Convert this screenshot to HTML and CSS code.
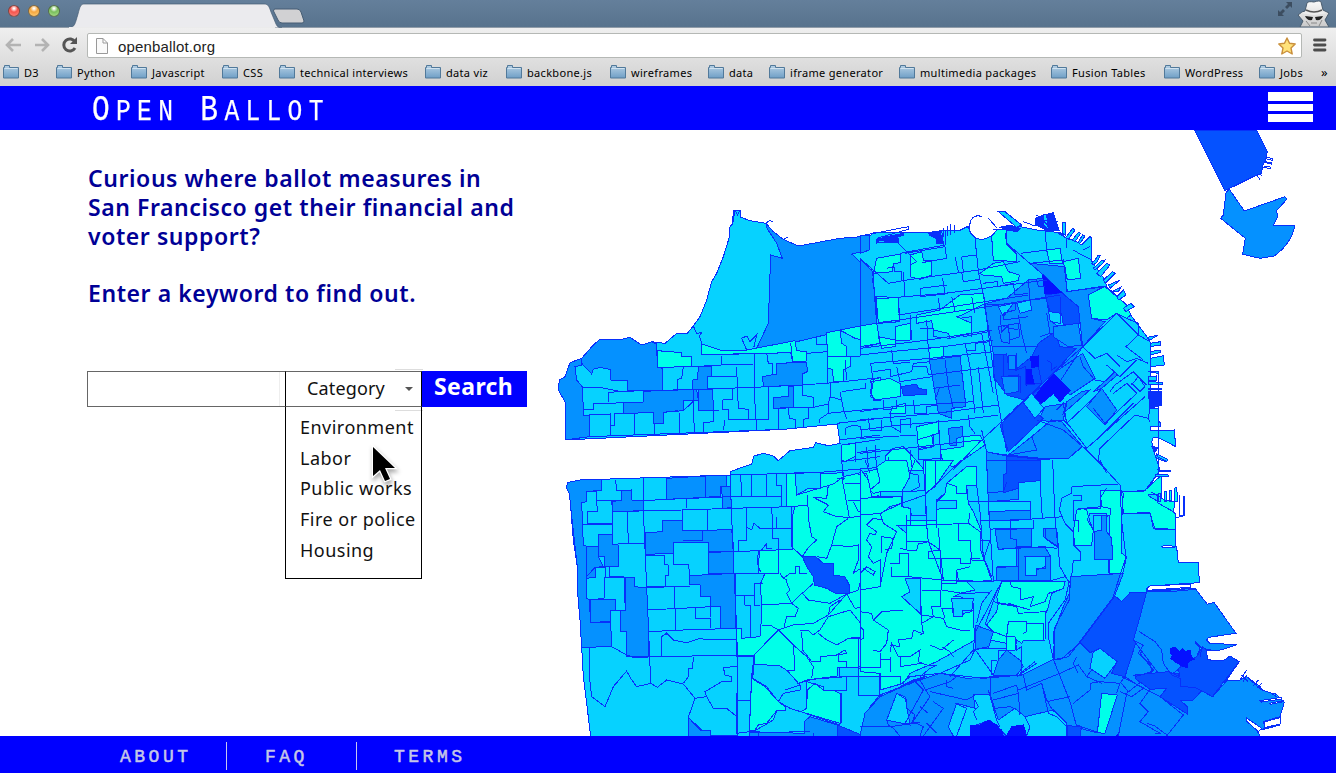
FILE: index.html
```html
<!DOCTYPE html>
<html lang="en">
<head>
<meta charset="utf-8">
<title>Open Ballot</title>
<link rel="stylesheet" href="styles.css">
</head>
<body>
<svg class="defs" width="0" height="0" aria-hidden="true">
  <defs>
    <linearGradient id="folderFill" x1="0" y1="0" x2="0" y2="1"><stop offset="0" stop-color="#b4cfe4"/><stop offset="1" stop-color="#6f9fc6"/></linearGradient>
    <linearGradient id="hatFill" x1="0" y1="0" x2="0" y2="1"><stop offset="0" stop-color="#fafafa"/><stop offset="1" stop-color="#c9c9c9"/></linearGradient>
    <symbol id="folder" viewBox="0 0 16 15"><path d="M.5 14V3.500H1.500V1.500H6.500V3.500H15.500V14Z" fill="url(#folderFill)" stroke="#51799a"/><path d="M1.500 4.500H14.500" stroke="#d0e2f0"/></symbol>
  </defs>
</svg>
<div class="browser">
  <div class="tabstrip">
    <div class="lights"><i class="light red"></i><i class="light amber"></i><i class="light green"></i></div>
    <svg class="tabs" width="240" height="28" viewBox="0 0 240 28"><path d="M0 28C6 27 6 24 9 14 11 6 12 4 15 4H195C199 4 200 6 202 12L207 24C208 27 210 27.500 213 28Z" fill="#ebebee" stroke="#465d74" stroke-width=".7"/><path d="M0 27.600H206" stroke="#ebebeb" stroke-width="1.200"/><path d="M206 9H228Q231 9 232 12L235 21Q235 23 233 23H213Q210 23 209 20L204.500 11Q204.500 9 206 9Z" fill="#d1d1d3" stroke="#465d74"/></svg>
    <svg class="fullscreen" width="16" height="16" viewBox="0 0 16 16"><path d="M9 1H15V7L13 5 10 8 8 6 11 3ZM1 9V15H7L5 13 8 10 6 8 3 11Z" fill="#3c4d60"/></svg>
    <svg class="incognito" width="34" height="27" viewBox="0 0 34 27"><path d="M3 27L6 21 1 15 5 12 8 11 10 3Q11 1 17 2 23 0 24 2L26 10 32 13 28 20 32 27Z" fill="url(#hatFill)" stroke="#4a5c6e"/><path d="M4 13Q16 9 30 13L17 15Z" fill="#eee"/><path d="M9 10Q17 14 25 10" fill="none" stroke="#555" stroke-width="1.500"/><path d="M8 16L16 17 15 20Q10 21 8 16ZM18 17L26 16Q24 21 19 20Z" fill="#222"/><path d="M9 21L13 26M25 20L22 26M14 23H20" stroke="#888" fill="none"/></svg>
  </div>
  <div class="toolbar">
    <svg class="nav" width="80" height="24" viewBox="0 0 80 24"><g fill="none" stroke="#b3b3b3" stroke-width="2.600"><path d="M7 11H21M13 5L7 11 13 17M35 11H48M42 5L48 11 42 17"/></g><path d="M75 8A6 6 0 1 0 75 14" fill="none" stroke="#555" stroke-width="3"/><path d="M77 3V10H70Z" fill="#555"/></svg>
    <div class="omnibox">
      <svg width="14" height="18" viewBox="0 0 14 18"><path d="M1.500 1.500H8L12.500 6V16.500H1.500ZM8 1.500V6H12.500" fill="#fafafa" stroke="#999"/></svg>
      <span class="url">openballot.org</span>
      <svg class="star" width="20" height="20" viewBox="0 0 20 20"><path d="M10 2L12.500 7.300 18.200 8 14 12 15.200 18 10 15 4.800 18 6 12 1.800 8 7.500 7.300Z" fill="#ffe27a" stroke="#c98f3c" stroke-width="1.400" stroke-linejoin="round"/></svg>
    </div>
    <svg class="menu" width="14" height="14" viewBox="0 0 14 14"><path d="M1.500 2H12M1.500 7H12M1.500 12H12" stroke="#4c4c4c" stroke-width="2.800" stroke-linecap="round"/></svg>
  </div>
  <nav class="bookmarks">
    <a><svg><use href="#folder"/></svg>D3</a><a><svg><use href="#folder"/></svg>Python</a><a><svg><use href="#folder"/></svg>Javascript</a><a><svg><use href="#folder"/></svg>CSS</a><a><svg><use href="#folder"/></svg>technical interviews</a><a><svg><use href="#folder"/></svg>data viz</a><a><svg><use href="#folder"/></svg>backbone.js</a><a><svg><use href="#folder"/></svg>wireframes</a><a><svg><use href="#folder"/></svg>data</a><a><svg><use href="#folder"/></svg>iframe generator</a><a><svg><use href="#folder"/></svg>multimedia packages</a><a><svg><use href="#folder"/></svg>Fusion Tables</a><a><svg><use href="#folder"/></svg>WordPress</a><a><svg><use href="#folder"/></svg>Jobs</a><span>»</span>
  </nav>
</div>
<header class="site-header">
  <h1 class="brand"><span class="cap">O</span>PEN <span class="cap">B</span>ALLOT</h1>
  <div class="burger"><i></i><i></i><i></i></div>
</header>
<main class="content">
  <section class="intro">
    <p class="lead">Curious where ballot measures in<br>San Francisco get their financial and<br>voter support?</p>
    <p class="lead">Enter a keyword to find out.</p>
    <div class="search">
      <div class="field"></div>
      <div class="category"><span>Category</span><i class="caret"></i>
        <ul class="options"><li>Environment</li><li>Labor</li><li>Public works</li><li>Fire or police</li><li>Housing</li></ul>
      </div>
      <div class="go"><span>Search</span></div>
      <svg class="cursor" width="36" height="44" viewBox="0 0 36 44"><path d="M5 4V33L12 27 17 38 22 36 17 25H27Z" fill="#000" stroke="#fff" stroke-width="2.500" paint-order="stroke"/></svg>
    </div>
  </section>
  <svg class="map" width="786" height="606" viewBox="0 -210 2358 1818">
    <!-- peninsula base -->
    <path class="c" d="M45 720V605L25 570 28 540 45 530 60 488 95 475 130 435 150 418 205 420 240 412 275 435 305 425 345 430 378 402 412 400 430 378 450 350 470 300 485 245 500 220 520 170 537 115 540 80 548 72 550 30H570L573 52 600 62 648 70 670 95 700 118 745 138 800 132 870 115 900 118 960 108 970 98 990 97 1130 98 1180 92 1225 92 1255 80 1262 100 1275 113 1295 120 1325 108 1340 90 1410 80 1460 90 1530 98 1550 115 1580 125 1595 135 1620 110 1625 115 1623 180 1665 240 1670 260 1730 315 1742 345 1792 412 1800 425V625H1825L1827 665 1832 670V680H1800V692L1873 690 1877 740 1830 715 1810 712 1805 725 1810 750 1825 795 1830 810 1810 840 1795 870 1800 885 1825 890 1875 955V1030L1880 1042 1885 1088H1945L1948 1148 1800 1158 1790 1165V1172L1935 1165 1972 1213 1992 1207 2058 1300 1975 1312 1970 1320 1980 1330 2062 1334 2005 1352 1968 1350V1375L1990 1383 2025 1382 2040 1368 2068 1385 2030 1440 2070 1440 2090 1430 2130 1460 2150 1482 2175 1480 2203 1507 2190 1550 2140 1565 2145 1585 2190 1575 2135 1590 2086 1555 2120 1590 2110 1608H122L100 1430 95 1340 90 1260 83 1180 82 1100 70 1020 62 920 58 880 50 865 52 848 90 840 540 825V815L605 792 612 768 640 760 670 768 685 782 720 752 790 742 797 728 835 737 870 730 862 672 700 688Z"/>
    <!-- Presidio and Richmond -->
    <g>
      <path class="m" d="M95 475L130 435 150 418 205 420 240 412 275 435 305 425 320 432 322 502 338 505V570L232 572V542L182 540 180 508 150 502 130 508 125 522 95 490ZM45 720V605L25 570 28 540 45 530 60 488 95 475V495L75 500 80 540 98 562 100 645H118V710ZM280 574L368 570 440 568 445 600H400V632L340 637V670H312L310 638 220 640V608L280 606ZM445 498L485 500V530H472V567H428V540L443 538ZM445 568H488L490 632H445ZM680 490L770 487 772 515 757 522V555L640 560 638 530 680 522ZM715 560H730V622L670 625V592L715 590ZM648 72L670 95 700 118 745 138 870 115 960 108 958 150 905 162 940 195 965 210 972 260 978 320 980 368 740 425 620 445 655 370 662 165 697 175 680 130 648 80Z"/>
      <path class="a" d="M322 452L395 458V470H425V500L322 502ZM455 432L510 450H590L735 422 740 452 770 455 768 485H728L722 458 455 465ZM830 398L870 390 875 430 890 440V468H832ZM832 470H900V500L880 510V545H850L848 508 832 505ZM870 390L980 368 990 430 948 440 940 420 915 415ZM962 540L990 533V600H970ZM875 735L915 730V770L885 785 875 780Z"/>
      <path class="n" d="M430 378L440 400 455 398 448 408 455 430V465M320 432V452M590 450L575 415 590 408 600 425 620 405 612 440M548 72L555 30 562 45 570 30M648 70L660 60 668 66M700 118L715 110M612 458V562L620 690M455 465L612 460M425 500L515 495 612 492M515 468V495M560 500L562 560 565 625 595 628V660M98 562L150 562 210 574 385 570 612 562 757 555 850 548 990 533M100 628H130V612L220 608M175 606V578L210 574M118 645L180 642V675H192V642L220 640M182 645V705M253 640V705M312 670V702M118 710L700 688M340 637L385 632M400 632L430 604V568M388 640V700M430 605L433 697M445 568V632L510 630M490 632V665L460 668 462 695M400 500L395 535 382 538V568M485 530L560 528M548 565V598L518 600V628L536 630V660L620 658M525 660 520 690M655 560V658L620 660M685 625V690M650 460L655 490 668 492V522M722 428 728 485M770 460 830 455M800 408V432H832V548M715 622L718 655 735 658V685M775 622V655L760 658V680M670 625L790 622 835 612M757 555V585L790 592V620M842 548V585L835 612V640L808 658V670M870 575L880 625 890 658M840 590 875 600M875 575L945 565 945 550M832 640L990 625M885 480 890 540M930 440V468L900 470M860 670L990 655M868 720 990 705M885 705V685L910 675 932 680 935 710M875 735L990 718M915 730 918 785M920 758 990 748M875 785 990 770"/>
    </g>
    <!-- Downtown, Western Addition, South of Market -->
    <g transform="translate(930)">
      <path class="a" d="M50 175L120 162V188L100 192 98 215 40 220ZM150 165L185 155 190 180 215 182V225L180 238 150 230ZM48 290L115 292 118 360 55 368ZM0 378L50 370 60 430 0 440ZM105 380L150 370 152 420 105 422ZM55 410L105 420V440L65 445ZM170 345L240 330 300 285 370 280 375 310 305 345 290 350 335 370 335 400 270 415 265 400 220 390 215 362 170 370ZM205 445L250 440V470L210 475ZM395 110L412 88 438 90V130L468 160V185L400 180ZM360 220L400 190 430 185 445 215 478 225 475 242 430 250 425 230 370 225ZM560 150L600 145 608 190 570 192ZM610 185L655 175 662 235 622 240ZM685 285L735 260 800 315 812 345 800 355 770 340 740 360 695 355ZM495 345L515 340 522 385 540 390 535 415 525 420 528 450 510 452 500 395ZM35 545L90 535 120 550V590L45 600 32 580ZM100 620L135 610V640L90 640ZM170 680L235 665V700L215 705 220 740 175 745ZM310 710L360 705 375 735 280 800 250 790 240 750 310 740ZM75 770L100 745 130 740 150 760 185 800 190 810H75Z"/>
      <path class="m" d="M0 105L30 108 28 150 0 160ZM0 175L38 215 50 370 0 378ZM208 480L300 468 318 620 275 625V655L235 640 222 560ZM265 685L308 680V710L290 715V735H270ZM372 312L440 295 505 240 550 235 560 300 570 360 668 440 735 365 695 355 685 285 735 258 620 275 615 200 510 190 550 225 640 310 655 320 668 440 570 590 440 580 400 460ZM580 520L668 460 705 535 630 585ZM620 605L665 575 690 570 610 640ZM680 620L725 565 770 630 735 675ZM700 575L745 535 765 515 772 525 725 565ZM515 710L575 660 605 665 668 740 625 775H545L445 765ZM535 660L555 620 620 610 610 660 575 665ZM380 755L440 768V810H380Z"/>
      <path class="c" d="M495 600L520 580 550 630 520 650ZM470 310L510 300 515 330 480 340ZM415 320L460 310 430 350Z"/>
      <path class="d" d="M555 285L605 278 655 320 660 370 610 375 605 340 570 335ZM400 465L440 462 445 495 465 510 515 470 535 430 585 395 600 440 648 445 580 520 495 600 440 585 400 530ZM125 560L170 552 175 565 200 570V582L130 588ZM495 600L550 555 530 590 515 580 490 610 550 655 445 755 420 675ZM440 768L540 778V810H440Z"/>
      <path class="c" d="M490 608L515 580 552 625 525 655Z"/>
      <path class="v" d="M548 225L605 278 555 282ZM512 470L535 468V500L515 502ZM495 507H515V520L522 550 500 555ZM580 520L630 572 600 605 580 580 545 610 525 590 555 550Z"/>
      <path class="m" d="M445 465H465V510L445 508ZM425 530L475 525V575L435 582ZM580 380L655 370 665 435 625 440 580 410ZM415 380L445 375 450 430 425 425Z"/>
      <path class="n" d="M0 175L85 250 140 240 355 210 480 185M40 220 38 250M115 130 170 185 150 195 152 230M80 205 102 200 105 215 125 215V240M255 90V135L120 160M135 160 255 140 260 175 185 188M285 170 295 215M345 115 355 215 375 310 385 400 410 580 440 755M305 170 350 165M305 170 310 215M435 100 440 130 550 225M482 160 560 150M555 90 560 150 570 192M510 190 610 180 622 275M130 215 135 290 50 297M180 265 260 255M248 235 255 280 135 290M180 265V290L255 282M305 215 310 245 360 238M368 250 412 245V260L460 250M255 280 560 240M115 295 120 365 55 370M115 345 505 285M235 295 240 330M275 290 285 335M335 290 345 340M50 370 385 320 600 285M150 345 155 420M200 360 205 450M180 385H220V410L270 415M300 355 335 350 335 410M0 445 205 420 395 390M0 465 90 455 250 440 400 420M30 490 210 475 400 455M95 450 100 490 150 488M40 515 90 508V530L155 515 160 490 210 485M32 490 40 545 32 590 50 600M110 500 120 545 215 530M160 500 200 500 205 525 405 500M255 480 265 560 280 625M300 470 318 620M315 430 330 500 345 640M355 500 370 640M365 400 400 580M310 410 385 395M320 450H345V430L390 425M0 635 100 620 340 605M0 660 230 640 415 615M0 690 120 675 300 660 415 645M0 715 170 705M0 760 90 750 360 720M25 655 30 690 65 690V660M90 640 95 680 120 695V660L150 655V685M160 600 165 640 200 640V620L235 615M240 560 225 600M220 565 300 555M170 720 220 705 220 740 175 750V780L245 775M235 660 245 810M365 690 380 755 400 760 440 765 545 778 625 775 665 740M325 645 330 680 345 700M150 750 155 800M45 735 50 810M20 740 25 800M85 770 90 810M70 600V630L110 625V600M380 315 465 310V330L430 340V360L505 350M420 345 425 395 445 375 475 370 480 410 450 420M430 380 475 390M475 345 485 400 500 460M505 240 510 300 560 295M460 250 465 285 505 280M530 240 535 260 555 260M560 340 570 400 540 410M600 290V370L570 365M430 465V530H480V580M470 460V510L495 500V555L545 550 535 500M400 440 535 440M560 480 575 490V510L590 500"/>
      <path class="n" d="M280 810L360 725 580 520 668 440 770 340 835 405 870 425M668 440 705 475 740 460 780 500M770 465 800 485 830 475 865 490M770 340 800 355 835 370 835 405 798 440 850 480M460 630 580 520M660 470 670 500 705 540 735 545M740 495 780 530 830 480M530 660 610 690 680 750 740 810M515 710 530 750 445 765M610 660 630 680 680 745 855 590M590 630 610 610 620 670 705 590M760 580 800 550 830 580 735 670 700 625M710 720 820 610M720 745 825 645 865 655 870 665M715 780 720 745M715 780 735 810M750 575 765 555 820 515 860 555M815 555 835 530 855 560 840 575 815 550M865 655 870 625M620 275 735 260M695 180 665 165 640 150M595 100 620 115V145M670 150 690 140"/>
      <path class="n" d="M330 90Q325 50 355 47L365 50M385 55 412 85M0 108 145 80M50 115 145 88 145 78M50 128H115V115M205 98 245 92 250 130"/>
      <path class="k" d="M50 118L80 110 130 100V106L112 112V125L70 128 80 122 60 120 50 130ZM205 98L240 95 245 110 250 132 228 130V115L208 105ZM525 55L550 45 580 38 598 92 560 92 540 80 525 75ZM420 82L450 75 480 85 470 95 440 90ZM865 575H905V615L895 618 870 625ZM875 740L895 742 885 755Z"/>
      <path class="c" d="M415 35H435L485 75 470 82ZM550 42L560 45 565 88 550 75ZM607 68H615V105L607 100ZM638 85L645 90 625 118 617 113ZM655 97 662 100 645 125 637 120ZM668 105 675 108 660 130 654 127ZM695 190 705 180 715 165 722 165 712 185 700 195ZM700 205 725 182 735 180 728 190 705 210ZM710 220 740 190 750 195 722 230ZM730 240 758 215 765 220 735 250ZM745 255 780 240 750 265ZM755 275 782 262 775 275ZM770 290 790 270 798 285 775 300ZM790 325 812 310 822 320 798 335ZM862 412 895 405 870 420ZM870 430 902 425V435L870 440ZM870 455 902 450V457L870 465ZM870 475 910 467 913 495 870 500ZM865 515H895V515 868 520ZM865 530 888 528V540H865ZM865 545 908 547V552H865ZM865 565H905V567H865ZM885 765 922 778 918 785 890 775Z"/>
      <path class="n" d="M250 110 252 85M262 108V78M272 105V72M282 100V75M300 92 320 80 330 90M530 60 595 65M530 45 580 90M490 65 525 78M400 90 480 85"/>
    </g>
    <!-- Sunset and Twin Peaks -->
    <g transform="translate(0 780)">
      <path class="m" d="M52 68L90 60 155 58V90L110 95V125L95 128 100 255 108 258 110 330V415L120 420V450L122 487 182 487 185 560 95 562 90 480 83 400 82 320 62 140 58 100 50 85ZM185 125L215 120V92L245 90V120L280 122V152L188 155ZM145 225L187 222V253L205 255V320H162V290L145 288ZM108 258H145V290L160 320 135 322V352L110 355ZM118 420L195 418V450H182V485L122 487ZM222 352L252 352V380L290 383 296 515V590H230V515H212V452H226ZM348 55L467 48V112L350 118ZM467 48L530 47V80H512V108L467 112ZM515 80H540L545 143 518 145ZM285 218L338 215V183L397 180V213L460 212 545 208 552 275 475 277V247H400L370 248V280L288 283ZM475 275L550 273V340H475ZM418 347L555 340V505H512V440L480 438V410L450 408V375L420 373Z"/>
      <path class="a" d="M710 42L765 38V80L812 85V42L880 38V50L990 25V165H940L990 180V620L862 622V648L770 660 740 672 712 632 612 612V585H562L560 505 575 505V535L630 530 635 470 632 370 645 340H625L628 272 728 268V165L735 140H710ZM605 655L645 680 685 725 705 740V752H680L670 780 615 812H598ZM770 665L820 680V692L850 690 870 700V790L752 755 770 745ZM925 625H990V648H925Z"/>
      <path class="d" d="M757 290H797L820 310H850V345L885 350 898 375V400L860 402 830 385 793 375 790 350 770 320ZM862 795L935 825 940 828H862Z"/>
      <path class="m" d="M415 772L450 810 480 812V828H415ZM598 815L762 820V785L780 770 862 795V828H598ZM935 828L940 790 960 740 990 705V828Z"/>
      <path class="c" d="M735 38H812V85H775L740 105ZM868 622H925V648H868ZM562 590H612L605 655 598 815 560 820ZM612 612L690 618 712 632 750 675V690L700 700 685 725 650 680 608 655Z"/>
      <path class="n" d="M90 60 540 45 800 38 990 22M110 95H140V122L210 120M140 122 142 155H112V190L187 192M97 192H187V222M187 125V250M205 250 285 250M197 60 200 92H245M280 52V152L290 380 296 515 302 670M280 122 350 118 545 110 695 108M185 155 395 150 545 145 725 140 775 135M232 155 235 250M410 115V145M397 150V213L458 212V242H400M472 150V210M110 350 135 322 205 320M285 285H342V312L355 315V345H345V378L290 380M370 280V312H415L420 345M373 382 377 510M165 352H222M165 320V352M225 352V450M165 352 162 415 118 420M195 420V450H212V515H230V580M178 320V350H222M290 383 420 378M290 450 450 442 480 440V470M436 445V475H480V505M296 515 400 510 560 505 575 505M335 590V530L350 520 370 540 410 548 450 535 475 540 560 538M350 515V525M95 562 185 560 230 585 250 592 560 585 612 588M120 562 118 650 125 710 165 740 190 680 230 633 242 655 260 680 302 670 322 682 350 660 400 672 435 715 470 710M430 590 428 625H415V650L400 670M435 715 415 772V828M470 710 465 695 515 665H545V650L525 645 520 622 560 620M470 710 490 745H530L558 768M415 772 455 810 480 812 482 825 560 828M558 505V590H562V722 828M562 722H600M612 588 605 650 598 810M540 45 552 340 560 505M572 45 575 108M605 45 603 108M650 45 648 108M680 42V75H695V138M708 42 710 140M550 340H632M590 145V240H565V275M550 275 625 272 730 268M588 200 605 210 612 190 630 205 665 205M665 140 668 205H725M680 170V205M668 205V235H685V340H632M555 405H612V370H640M582 408 585 435H600V535M612 405V435H630M725 140V260L757 290M740 105 850 72 880 50M773 105 775 175 785 230 800 240 775 262 757 290M790 112 830 115 835 75M790 112 835 135 820 155 860 170 898 172 990 165M875 50 898 172M893 122H930V95H945V70L885 70M910 125 925 155 960 160 965 125 985 105M860 55 885 55M925 45 950 40 955 70M800 290 830 295 845 255 860 200 895 175M845 255 900 260 925 255V300L910 340 940 320 970 345 935 350 925 390 898 400M945 170 960 190 950 230 985 225 960 235 960 260 950 290 970 310 975 330M945 185 975 175 990 180M635 270 650 250V265H665M625 272 622 310 632 337M690 340 700 355 720 340H735V320H748V340H770M690 340 695 350 710 360 712 375 720 390 710 400 725 430 632 435M757 400 790 370M757 400 775 420 840 430 890 402 915 445 945 440 970 460 990 480M725 430 757 398M725 430 745 445 735 470 710 470 702 500M635 495 660 495 685 510 730 495 790 490 835 465 865 430 890 402M835 465 840 440 870 420M612 585 685 510 730 555 770 590 790 620 785 655M730 555 735 630 712 632M612 585V612M750 512H775L790 525 810 510 835 470 900 450 940 500V530L895 535 860 555 830 540 805 520M755 515 758 570 785 605H810V590L860 585 885 570 890 580 865 585V605H890V622H862V648M895 535H990M925 535V620M965 575 975 540M685 725 720 745 752 755 870 795M615 810 625 795 650 790 680 752M740 672 785 658 890 650V690H850M705 690 750 675M770 745 772 690 795 670 820 690M870 700H875V790M925 650V705H990M600 818 780 815M790 818V828M625 820V828M940 800 990 802M875 0 880 60M945 0 960 40"/>
    </g>
    <!-- Mission, Noe Valley, Excelsior, Potrero -->
    <g transform="translate(930 780)">
      <path class="a" d="M50 20L80 0H140L150 50 125 95H60L40 100 30 90 60 65ZM190 0 280 0 225 80 195 100ZM0 25 25 60 35 110 125 110V140L150 145V195H110L140 220V245H205L240 270 250 360 320 365 345 390 300 400 280 410H300L340 430V480L345 540 230 605 150 640 130 670 60 690V640L0 635ZM260 70 320 20H350V75H320L325 130 340 155 365 215 360 265 395 360 350 365 320 365 250 360 205 245 140 245V180H230V120L255 100ZM425 365H615L610 385 575 400 565 440 558 460 555 540H490L485 550 470 540 465 570 440 572 440 550 390 540 400 515 380 495 410 455 415 430 410 410ZM640 215 650 150 670 145 725 140 720 90H785L790 100 785 180V280L800 290 788 340 748 340V165H700V210L695 255 645 258ZM785 95H850L905 45 905 130 945 160V208H885L870 160H790Z"/>
      <path class="c" d="M127 95 195 92 200 165 155 168 150 145 127 140ZM230 122H290V145H255L230 148ZM275 415H340L335 455 310 460 308 470H280ZM135 355H180V460L125 410 150 395ZM690 160H740V165H700V210L682 180Z"/>
      <path class="m" d="M380 0H440V65L430 90 475 65V118L385 125ZM385 155 510 150V178L390 182ZM405 210 515 205V260L415 268ZM470 260 555 262 572 290V362H410V322L470 320ZM550 205H590L595 260 550 230ZM345 495 400 515 385 565 345 568ZM725 165H740V215L755 235 758 298H702V215L725 210ZM632 350 790 340 765 405 660 545 625 590 585 598 580 520 610 440 628 400ZM415 600 440 570 480 600 490 620 470 645H400ZM0 828 15 760 60 710 150 670 240 640 320 655 485 645 580 598 605 597 660 548 690 572 740 550 835 400H990V828Z"/>
      <path class="c" d="M80 780 110 700 135 710 150 795ZM265 800 290 730 345 745 340 705 390 702 415 780 465 745 495 770 580 750 620 790V828H440L390 780 335 800V828H280ZM495 290H555V320L530 330V345H497Z"/>
      <path class="d" d="M765 408 785 425 810 398H860V440L830 540 795 650 755 640 770 605 720 565 690 578 660 548ZM440 0H540V62L475 68V85L430 98V45L440 40ZM822 645 850 655 925 635 990 650V765L900 700 950 690 925 685 885 680ZM622 797 665 800 660 828H622Z"/>
      <path class="v" d="M330 828V795L360 795 385 780 415 798V810L425 808 430 828ZM440 828 455 800 490 795 500 828ZM770 828 795 800 828 828Z"/>
      <path class="a" d="M725 700 772 705 735 820 712 818Z"/>
      <path class="n" d="M578 0 585 175 600 320 628 370M540 62 547 175M440 65 430 95 385 98M380 0 385 125 400 365M350 75 360 155 370 290 395 350M195 105 305 0M195 0V110L200 195M225 0V75M165 0 150 40 175 45 178 80 150 95 125 93M0 115 125 110M125 130 195 105M125 130 60 160 70 190 110 215 80 280 60 380 0 390M125 130 90 140 65 160 0 165M70 180 40 175 20 195 50 215 45 225 30 220 20 240 35 260 25 290 40 310 60 300V380M0 340 20 320 45 335 40 345 10 325M75 270 95 265 100 235 65 230V280M140 165V270L120 265M140 195H200L205 245 175 252 170 270 140 273M200 195 330 190M235 205 240 270 205 275V295H300V310H330V295H360M240 270 245 390M295 190V240H330L335 300M330 160 325 190 360 215V240L390 240 370 300H335M90 310H118V280H145V350L245 360 400 365M145 350H95V320M180 355 185 490M185 390H240V440H215L220 470 185 465M245 370H290V330L330 320M245 390 305 400 390 398M290 330 295 360 335 365M230 125 255 100 260 70 290 80V100H320V75L350 75M230 145V205M325 125H510V150L385 155M360 180 450 182 610 170M390 210 405 205 520 205V180M450 182V205M415 268 550 260 590 265M452 210V235L470 240V265M475 262V320H410M515 205V262M555 205V235L590 260M495 290H572V362M475 320V362M497 290V345H530V325H555V290M398 362H572L580 360 615 350 628 365M425 365 360 490 345 520 340 570 270 650M395 390 365 430 350 490M415 380 375 495M445 430 510 450M450 365 455 380 480 385 480 420 520 410 510 440 555 425 565 400 600 390M480 440 400 425M445 485H500V515L490 520M500 490H550V540H490M445 485 440 530 400 515M410 430 470 440 475 460 555 455V530M385 560 345 568 400 645M385 565H440V530H465L470 570 485 560 485 645M440 570H415V600M410 600H395V645M345 568 330 600 240 640 150 650 120 675M628 365 615 420 565 490 565 530 580 598M632 350 628 420 585 500 580 598 630 725 650 800M710 0 780 75 785 185 798 290 760 408M720 0 740 40M785 95 855 92 890 45M790 160 870 158 880 205 945 208M635 80 775 72M635 80V100L605 115 598 150 615 190 640 215V255L660 275V300H640L635 350M640 105H665V120H640V180H655V215M665 145 680 150 690 185 700 210M655 145 720 145V115L740 85M722 140 750 145V165L740 170M700 210 695 255H645M702 298H758M745 298V340M632 350 790 340M125 410 185 465M185 490 220 470 250 475 260 500 300 510H330M185 490 190 520 180 525M255 475 245 445H280V470H308V450H340M185 520 160 510 155 535 115 540 120 560 90 555M40 480 65 455 130 450M0 455 35 460 40 480 85 510 80 550 60 575 40 570M0 500 10 510V535L0 540M90 575 95 550 115 590 150 590 180 570 175 605 200 615H230L210 625 180 650M210 555 245 570 280 540M90 590V635M60 580V598H90M0 622H60V600M0 650H120V675M58 640V705M120 590V620L185 610M245 560 270 575 280 590M0 705H60L150 670M145 650 240 640 370 655 485 645 580 598M165 665 190 690 135 790 180 788M195 690 270 665 290 650M180 660 200 695 210 710 155 790M260 660V680L280 685M220 725 250 745 190 828M180 740 205 760M210 695 255 705 320 720 345 705 390 702V650M285 730 320 745 290 828M345 720 355 740 340 755 350 780M385 690 410 780 420 800M405 745 450 740 470 750M400 720 475 700 470 675 400 700M475 700 480 765M490 645 500 690 545 670 560 720 580 755M475 690 600 640 655 615 680 650 695 630M545 670 565 760 590 770 620 800M560 725 630 710M655 550 660 548 690 578M650 590 640 610 655 640M640 730 690 690V670L720 665M680 650 725 670M720 665 780 670 770 700M780 670 795 650M785 670 820 715V700L860 725M820 540 860 560 840 580 880 630 870 640M795 650 900 720 980 765M885 680 840 740 865 760 840 785 890 820M820 645 885 690M0 800 90 800 180 788M80 780 85 795 100 805 120 828M110 700 140 720 140 745 165 765 155 790M170 790 190 800 180 828M200 790 230 820M500 828 510 800 495 770 580 750M480 640 525 605M470 650 530 610M650 795 715 818"/>
      <path class="c" d="M700 575 720 565 772 605 735 655 690 625Z"/>
      <path class="k" d="M120 680 160 660 200 648 150 672Z"/>
    </g>
    <!-- Bayview and the southern waterfront -->
    <g transform="translate(1590 750)">
      <path class="m" d="M200 425 345 415 382 463 402 457 468 550 385 562 380 570 390 580 472 584 415 602 370 598 345 578 360 595 350 620 250 690 160 570 180 500ZM140 730 215 670 300 690 400 738 440 692 480 690 500 680 545 720 575 730 613 757 600 800 550 815 555 835 600 825 545 838 500 805 530 840 540 858H115Z"/>
      <path class="d" d="M165 675 215 670 265 665 300 680 295 655 350 620 368 590 380 600 382 628 400 633 430 632 450 618 478 635 397 740 365 722 340 750 302 752 322 770V792L240 740 260 715 210 718 165 685Z"/>
      <path class="v" d="M270 595 285 592 300 605 308 595 315 605 330 600 332 615 342 628 325 635 322 652 310 650 285 635 272 625 280 615 270 610Z"/>
      <path class="n" d="M178 545 225 575 245 600 250 640 275 675 300 685V710L345 712 365 722M160 570 190 585 175 610 210 640 215 665 165 680M125 680 240 740 310 795 260 858M210 718 180 760 205 785 180 815 240 850 225 850M200 820 225 828 265 858M200 425H270L345 418M190 715 155 740 120 725M348 578 365 595 360 620M345 575 370 598M440 690 425 700M480 690 500 660M485 675 505 695M490 695 500 675M520 708 535 690M530 715 545 700M500 805 535 835M0 835 50 848"/>
      <path class="w" d="M202 415 210 408 330 402V412L202 421ZM540 752 605 742V747L545 756ZM568 760 610 752V755L570 763ZM245 289 260 286 290 290 275 294 250 293ZM552 816 600 803V822L552 833ZM500 804 545 835 535 845 498 812Z"/>
      <path class="c" d="M230 12 263 28 260 34 232 20ZM235 60 272 62V65H240ZM225 72 265 75V80H225ZM205 132H235V155L205 137Z"/>
      <path class="a" d="M235 130H240V155H235ZM252 123H260V155H252ZM268 120H273V155H268ZM282 115 290 112 293 155H282ZM212 125 232 135V158L280 185 285 155 255 150Z"/>
      <path class="n" d="M297 135V195H314V138H309V195M285 203 310 199"/>
    </g>
    <!-- Yerba Buena and Treasure Island -->
    <g transform="translate(1650 -240)">
      <path class="d" d="M283 30 375 212 470 165 485 160 487 140 497 118 502 95 470 30Z"/>
      <path class="m" d="M378 218 388 208 433 273 555 230 560 238 530 272 533 290 520 317H584Q575 370 523 408L480 415 428 403 436 355 362 295 370 285Z"/>
      <path class="n" d="M497 110 518 116V121L496 116M495 125 515 129 514 132 492 127M492 138 510 141V146L490 142M470 165 480 178M478 162 487 168"/>
    </g>
  </svg>
</main>
<footer class="site-footer"><a>ABOUT</a><a>FAQ</a><a>TERMS</a></footer>
</body>
</html>
```

FILE: styles.css
```css
* { box-sizing: border-box; }
body { margin: 0; width: 1336px; height: 773px; overflow: hidden; background: #fff; font-family: "Noto Sans", "Open Sans", sans-serif; }
.defs { position: absolute; }
.browser { height: 86px; background: linear-gradient(#efefef 28px, #d2d2d2 84px); }
.tabstrip { height: 28px; display: flex; background: linear-gradient(#647f9b, #58738d); border-bottom: 1px solid #919da9; }
.lights { display: flex; gap: 8px; padding: 5px 0 0 8px; width: 69px; }
.light { width: 12px; height: 12px; border-radius: 50%; border: 1px solid rgba(40,40,40,.55); }
.red { background: radial-gradient(circle at 50% 25%, #fff 5%, #f5544d 40%, #f98d83); }
.amber { background: radial-gradient(circle at 50% 25%, #fff 5%, #f4a63f 40%, #ffd681); }
.green { background: radial-gradient(circle at 50% 25%, #fff 5%, #79bd5c 40%, #b4e594); }
.tabs { flex: none; }
.fullscreen { margin: 1px 0 0 968px; flex: none; }
.incognito { margin-left: 4px; flex: none; }
.toolbar { height: 32px; display: flex; align-items: center; padding-top: 3px; }
.nav { flex: none; }
.omnibox { margin-left: 7px; width: 1215px; height: 25px; border: 1px solid #b5b8b5; border-radius: 2px; background: #fff; display: flex; align-items: center; padding: 0 4px 0 7px; }
.url { font: 15px/22px "Liberation Sans", sans-serif; color: #222; margin: 3px 0 0 9px; flex: 1; letter-spacing: .15px; }
.menu { margin: -2px 0 0 11px; }
.bookmarks { display: grid; grid-template-columns: 53px 75px 91px 57px 146px 81px 104px 98px 61px 130px 152px 113px 95px 62px 12px; padding-left: 3px; height: 24px; font-size: 11px; color: #000; }
.bookmarks a { display: flex; align-items: center; gap: 5px; white-space: nowrap; letter-spacing: .32px; }
.bookmarks svg { width: 16px; height: 15px; flex: none; margin-top: -1px; }
.bookmarks span { line-height: 24px; font-size: 13px; }
.site-header { height: 44px; background: #00f; display: flex; justify-content: space-between; padding: 6px 23px 0 92px; }
.brand { margin: 2px 0 0; font: 30px/34px "Liberation Mono", monospace; color: #fff; letter-spacing: 7.700px; white-space: pre; transform: scaleX(.82); transform-origin: 0 0; -webkit-text-stroke: .25px #fff; }
.cap { font-size: 36px; }
.burger { width: 45px; display: grid; grid-template-rows: 9px 7px 8px; row-gap: 3px; }
.burger i { background: #fff; }
.content { height: 606px; display: grid; grid-template-columns: 550px 786px; }
.intro { padding: 34px 0 0 88px; }
.lead { margin: 0 0 28px; font-size: 23px; line-height: 29px; font-weight: 600; color: #000096; white-space: nowrap; letter-spacing: .57px; }
.search { position: relative; margin: 63px 0 0 -1px; display: flex; width: 440px; height: 36px; }
.field { width: 198px; border: 1px solid #666; border-right: 0; box-shadow: inset -5px 0 #fff, inset -6px 0 #eee; }
.category { width: 137px; border: 1px solid #000; border-top-color: #666; border-bottom-color: #666; position: relative; font-size: 18px; line-height: 33px; padding-left: 21px; color: #111; letter-spacing: .15px; }
.category::before { content: ""; position: absolute; right: -2px; top: -3px; width: 28px; height: 40px; border: solid #ddd; border-width: 1px 0; }
.caret { position: absolute; left: 119px; top: 15px; border: 4px solid transparent; border-top-color: #555; }
.options { position: absolute; left: -1px; top: 35px; width: 137px; height: 172px; margin: 0; padding: 5px 0 0 14px; border: 1px solid #000; border-top: 0; list-style: none; line-height: 30.700px; white-space: nowrap; letter-spacing: .48px; }
.go { width: 105px; background: #00f; color: #fff; font-weight: 700; font-size: 23px; line-height: 31px; padding-left: 12px; letter-spacing: .4px; }
.cursor { position: absolute; left: 281px; top: 72px; filter: drop-shadow(1px 3px 2px rgba(0,0,0,.35)); }
.map { display: block; }
.map path { stroke: #0830fb; stroke-width: 3; shape-rendering: crispEdges; }
.map .c { fill: #06d2ff; }
.map .a { fill: #00ffe9; }
.map .m { fill: #0591ff; }
.map .d { fill: #0552ff; }
.map .v { fill: #0511ff; stroke: #0511ff; }
.map .k { fill: #0830fb; }
.map .n { fill: none; }
.map .w { fill: #fff; }
.site-footer { height: 37px; background: #00f; display: flex; align-items: center; padding-left: 120px; color: #c6c6e8; font: 18px/28px "Liberation Mono", monospace; letter-spacing: 3.500px; -webkit-text-stroke: .5px #c6c6e8; }
.site-footer a { height: 28px; line-height: 31px; margin-top: 3px; }
.site-footer a:nth-child(1) { width: 107px; border-right: 1px solid #c6c6ee; }
.site-footer a:nth-child(2) { width: 130px; padding-left: 38px; border-right: 1px solid #c6c6ee; }
.site-footer a:nth-child(3) { padding-left: 37px; }
```
